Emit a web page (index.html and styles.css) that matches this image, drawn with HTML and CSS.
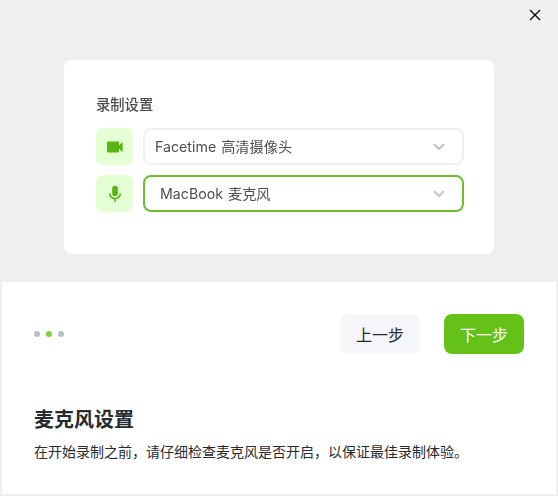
FILE: index.html
```html
<!DOCTYPE html>
<html lang="zh-CN">
<head>
<meta charset="utf-8">
<title>麦克风设置</title>
<link rel="stylesheet" href="styles.css">
</head>
<body>
<main class="dialog">
  <section class="preview">
    <button class="close" aria-label="关闭">
      <svg width="12" height="12" viewBox="0 0 12 12"><path d="M1 1l10 10M11 1L1 11"/></svg>
    </button>
    <div class="card">
      <h2 class="card-title">录制设置</h2>
      <div class="row">
        <span class="tile"><svg width="18" height="18" viewBox="0 0 18 18"><path d="M2 3.400h10a1 1 0 0 1 1 1v2.900L16.600 4v10L13 10.700v2.900a1 1 0 0 1-1 1H2a1 1 0 0 1-1-1V4.400a1 1 0 0 1 1-1z"/></svg></span>
        <div class="select"><span>Facetime 高清摄像头</span><svg class="chevron" width="12" height="8" viewBox="0 0 12 8"><path d="M1.700 1.700L6 6l4.300-4.300"/></svg></div>
      </div>
      <div class="row">
        <span class="tile"><svg width="18" height="18" viewBox="0 0 18 18"><rect x="6.200" y="0.800" width="5.600" height="10.400" rx="2.800"/><path class="stand" d="M3.700 8.400a5.300 5.300 0 0 0 10.600 0M9 13.700V17"/></svg></span>
        <div class="select active"><span>MacBook 麦克风</span><svg class="chevron" width="12" height="8" viewBox="0 0 12 8"><path d="M1.700 1.700L6 6l4.300-4.300"/></svg></div>
      </div>
    </div>
  </section>
  <section class="content">
    <div class="controls">
      <div class="dots"><i></i><i class="current"></i><i></i></div>
      <div class="buttons">
        <button class="button">上一步</button>
        <button class="button primary">下一步</button>
      </div>
    </div>
    <h1 class="title">麦克风设置</h1>
    <p class="description">在开始录制之前，请仔细检查麦克风是否开启，以保证最佳录制体验。</p>
  </section>
</main>
</body>
</html>
```
FILE: styles.css
```css
* { box-sizing: border-box; }

body {
  margin: 0;
  height: 496px;
  padding: 0 2px 2px;
  background: #eeeff1;
  color: #262b30;
  font-family: "Noto Sans CJK SC", sans-serif;
}

.dialog {
  height: 494px;
  display: flex;
  flex-direction: column;
}

button {
  border: 0;
  padding: 0;
  font-family: inherit;
}

.preview {
  position: relative;
  height: 282px;
  padding: 60px 62px 0;
  background: #eeeff1;
}

.close {
  position: absolute;
  top: 9px;
  right: 15px;
  width: 12px;
  height: 12px;
  background: none;
}

.close svg { display: block; }

.close path {
  stroke: #000;
  stroke-width: 1.3;
}

.card {
  height: 194px;
  padding: 34px 30px 0 32px;
  border-radius: 8px;
  background: #fff;
  color: #4a4e53;
  filter: blur(0.5px);
}

.card-title {
  margin: 0 0 14px;
  font-size: 14.3px;
  line-height: 20px;
  font-weight: 500;
}

.row {
  display: flex;
  gap: 10px;
  margin-bottom: 10.400px;
}

.tile {
  display: flex;
  align-items: center;
  justify-content: center;
  width: 37px;
  height: 37px;
  border-radius: 7px;
  background: #e3ffd3;
}

.tile svg { fill: #57b411; }

.tile .stand {
  fill: none;
  stroke: #57b411;
  stroke-width: 1.6;
}

.select {
  flex: 1;
  display: flex;
  align-items: center;
  justify-content: space-between;
  height: 37px;
  padding: 0 17px 0 10px;
  border: 2px solid #efeff0;
  border-radius: 8px;
  font: 14.2px/20px Inter, "Noto Sans CJK SC", sans-serif;
  word-spacing: 1px;
}

.select.active {
  padding-left: 15px;
  border-color: #6dbe2c;
}

.chevron {
  fill: none;
  stroke: #c0c4c8;
  stroke-width: 2;
  stroke-linecap: round;
}

.content {
  flex: 1;
  padding: 32px;
  background: #fff;
}

.controls {
  display: flex;
  align-items: center;
  justify-content: space-between;
  height: 40px;
}

.dots {
  display: flex;
  gap: 6px;
}

.dots i {
  width: 6px;
  height: 6px;
  border-radius: 50%;
  background: #b9bec5;
}

.dots .current { background: #7dd13c; }

.buttons {
  display: flex;
  gap: 24px;
}

.button {
  width: 80px;
  height: 40px;
  border-radius: 8px;
  background: #f4f6f9;
  color: #262b30;
  font-size: 16px;
  line-height: 24px;
}

.button.primary {
  background: #64c117;
  color: #fff;
}

.title {
  margin: 50px 0 0;
  font-size: 20px;
  line-height: 30px;
  font-weight: 700;
}

.description {
  margin: 7px 0 0;
  font-size: 14px;
  line-height: 20px;
  white-space: nowrap;
}
```
